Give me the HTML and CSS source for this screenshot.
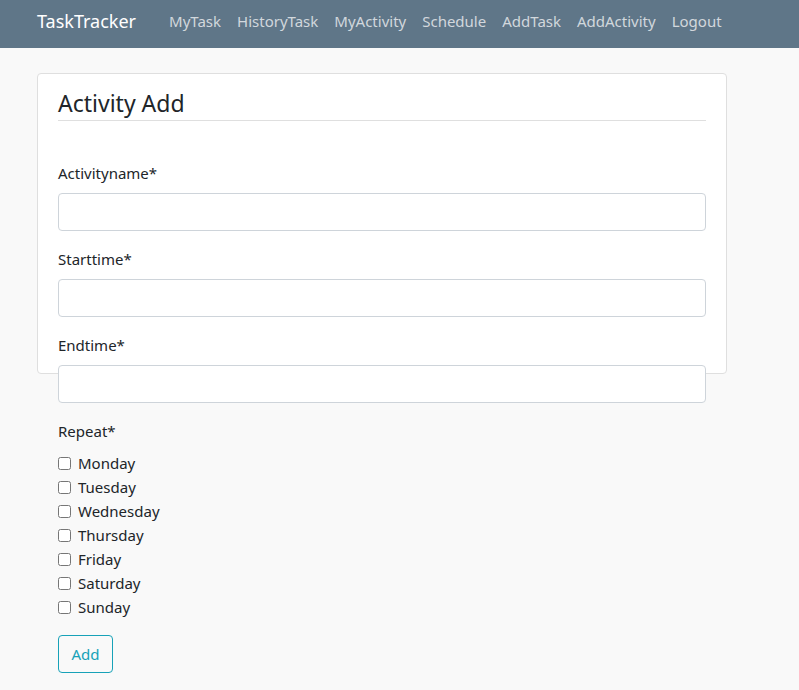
FILE: index.html
```html
<!DOCTYPE html>
<html>
<head>
<meta charset="utf-8">
<link rel="stylesheet" href="styles.css">
</head>
<body>
<nav class="navbar">
  <a class="brand" href="#">TaskTracker</a>
  <ul class="nav-links">
    <li><a href="#">MyTask</a></li>
    <li><a href="#">HistoryTask</a></li>
    <li><a href="#">MyActivity</a></li>
    <li><a href="#">Schedule</a></li>
    <li><a href="#">AddTask</a></li>
    <li><a href="#">AddActivity</a></li>
    <li><a href="#">Logout</a></li>
  </ul>
</nav>
<main class="container">
  <div class="card">
    <h2 class="title">Activity Add</h2>
    <form class="form">
      <div class="group">
        <label class="label">Activityname*</label>
        <input class="input" type="text">
      </div>
      <div class="group">
        <label class="label">Starttime*</label>
        <input class="input" type="text">
      </div>
      <div class="group">
        <label class="label">Endtime*</label>
        <input class="input" type="text">
      </div>
      <div class="group">
        <label class="label">Repeat*</label>
        <div class="checks">
          <label class="check"><input type="checkbox"><span>Monday</span></label>
          <label class="check"><input type="checkbox"><span>Tuesday</span></label>
          <label class="check"><input type="checkbox"><span>Wednesday</span></label>
          <label class="check"><input type="checkbox"><span>Thursday</span></label>
          <label class="check"><input type="checkbox"><span>Friday</span></label>
          <label class="check"><input type="checkbox"><span>Saturday</span></label>
          <label class="check"><input type="checkbox"><span>Sunday</span></label>
        </div>
      </div>
      <button class="btn" type="button">Add</button>
    </form>
  </div>
</main>
</body>
</html>
```
FILE: styles.css
```css
* , *::before, *::after { box-sizing: border-box; }
html, body { margin: 0; padding: 0; }
body {
  background: #f9f9f9;
  font-family: "Noto Sans", "Open Sans", sans-serif;
  font-size: 15px;
  line-height: 24px;
  color: #212529;
}
.navbar {
  height: 48px;
  background: #5f7688;
  display: flex;
  align-items: center;
  padding: 0 0 6px 37px;
}
.brand {
  color: #ffffff;
  text-decoration: none;
  font-size: 18px;
  margin-right: 25px;
}
.nav-links {
  list-style: none;
  margin: 0;
  padding: 0;
  display: flex;
}
.nav-links a {
  display: block;
  padding: 0 8px;
  color: rgba(255, 255, 255, 0.72);
  text-decoration: none;
  font-size: 15px;
}
.container {
  padding: 25px 0 16px 37px;
  position: relative;
  z-index: 0;
}
.card {
  position: relative;
  width: 690px;
  padding: 13px 21px 0 21px;
}
.card::before {
  content: "";
  position: absolute;
  left: 0;
  top: 0;
  width: 100%;
  height: 301px;
  background: #ffffff;
  border: 1px solid #dfdfdf;
  border-radius: 4px;
  z-index: -1;
}
.title {
  margin: 0;
  font-weight: 400;
  font-size: 23px;
  line-height: 34px;
  border-bottom: 1px solid #dfdfdf;
  color: #212529;
}
.form {
  padding-top: 40px;
}
.group {
  margin-bottom: 16px;
}
.label {
  display: block;
  margin-bottom: 8px;
  line-height: 24px;
}
.input {
  display: block;
  width: 100%;
  height: 38px;
  border: 1px solid #ced4da;
  border-radius: 4px;
  background: #fff;
  font: inherit;
}
.checks {
  display: flex;
  flex-direction: column;
}
.check {
  display: flex;
  align-items: center;
  height: 24px;
}
.check input {
  margin: 0 7px 0 0;
  width: 13px;
  height: 13px;
}
.btn {
  display: block;
  height: 38px;
  width: 55px;
  background: transparent;
  border: 1px solid #17a2b8;
  border-radius: 4px;
  color: #17a2b8;
  font: inherit;
  padding: 0;
}
```
